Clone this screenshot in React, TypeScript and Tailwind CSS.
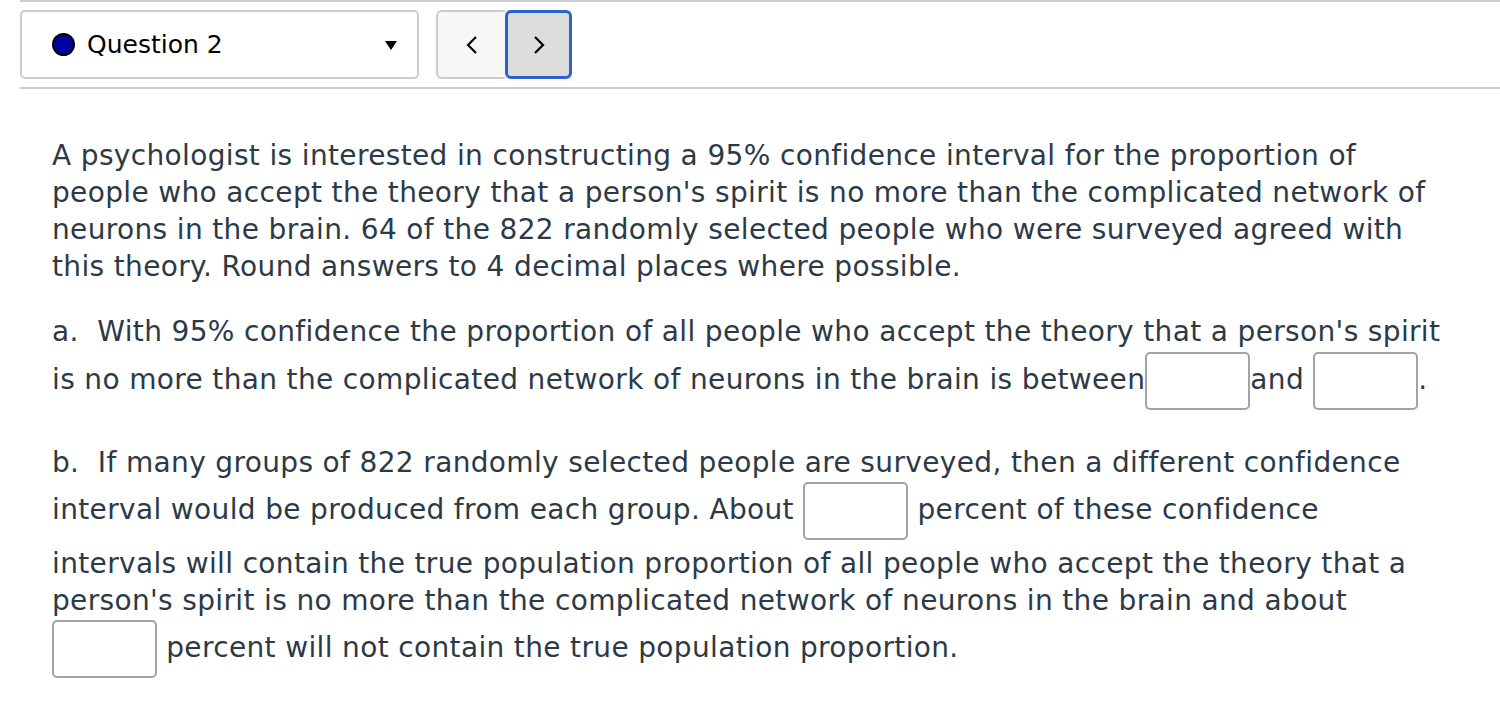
import React from "react";

const Blank = () => (
  <span className="inline-block w-[105px] h-[58px] shrink-0 rounded-[5px] border-2 border-[#a3a3a3] bg-white" />
);

const Line = ({ children }: { children: React.ReactNode }) => (
  <div className="h-[37px] pt-[4px] leading-[33px] whitespace-pre">{children}</div>
);

export default function App() {
  return (
    <div className="w-[1500px] h-[704px] bg-white overflow-hidden font-['DejaVu_Sans',sans-serif]">
      {/* question nav bar */}
      <div className="ml-[20px] border-t-2 border-[#cccccc] pt-[8px]">
        <div className="flex items-center gap-[17px]">
          <div className="w-[399px] h-[69px] rounded-[5px] border-2 border-[#cccccc] flex items-center pl-[30px] pr-[20px]">
            <span className="w-[23px] h-[23px] rounded-full bg-[#00009e] border-2 border-black" />
            <span className="ml-[12px] text-[25px] text-black">Question 2</span>
            <span className="ml-auto mt-[2px] w-0 h-0 border-l-[6px] border-r-[6px] border-t-[9px] border-l-transparent border-r-transparent border-t-black" />
          </div>
          <div className="flex h-[69px]">
            <button className="w-[69px] h-full rounded-l-[6px] border-2 border-r-0 border-[#cccccc] bg-[#f7f7f7] flex items-center justify-center">
              <svg width="14" height="20" viewBox="0 0 14 20" fill="none" stroke="black" strokeWidth="2.2">
                <path d="M11 2 L3 10 L11 18" />
              </svg>
            </button>
            <button className="w-[67px] h-full rounded-[6px] border-[3px] border-[#2a62c9] bg-[#dddddd] flex items-center justify-center">
              <svg width="14" height="20" viewBox="0 0 14 20" fill="none" stroke="black" strokeWidth="2.2">
                <path d="M3 2 L11 10 L3 18" />
              </svg>
            </button>
          </div>
        </div>
        <div className="mt-[8px] border-t-2 border-[#cccccc]" />
      </div>

      {/* question body */}
      <div className="pl-[52px] text-[28px] tracking-[0.35px] text-[#2c3a47]">
        <div className="mt-[46px]">
          <Line>A psychologist is interested in constructing a 95% confidence interval for the proportion of</Line>
          <Line>people who accept the theory that a person's spirit is no more than the complicated network of</Line>
          <Line>neurons in the brain. 64 of the 822 randomly selected people who were surveyed agreed with</Line>
          <Line>this theory. Round answers to 4 decimal places where possible.</Line>
        </div>

        <div className="mt-[28px]">
          <Line>a.  With 95% confidence the proportion of all people who accept the theory that a person's spirit</Line>
          <div className="mt-[4px] flex items-center whitespace-pre">
            <span className="-mt-[2px]">is no more than the complicated network of neurons in the brain is between</span>
            <Blank />
            <span className="-mt-[2px]">and </span>
            <Blank />
            <span className="-mt-[2px]">.</span>
          </div>
        </div>

        <div className="mt-[32px]">
          <Line>b.  If many groups of 822 randomly selected people are surveyed, then a different confidence</Line>
          <div className="mt-[3px] flex items-center whitespace-pre">
            <span className="-mt-[2px]">interval would be produced from each group. About </span>
            <Blank />
            <span className="-mt-[2px]"> percent of these confidence</span>
          </div>
          <div className="mt-[3px]">
            <Line>intervals will contain the true population proportion of all people who accept the theory that a</Line>
            <Line>person's spirit is no more than the complicated network of neurons in the brain and about</Line>
          </div>
          <div className="mt-[3px] flex items-center whitespace-pre">
            <Blank />
            <span className="-mt-[2px]"> percent will not contain the true population proportion.</span>
          </div>
        </div>
      </div>
    </div>
  );
}
